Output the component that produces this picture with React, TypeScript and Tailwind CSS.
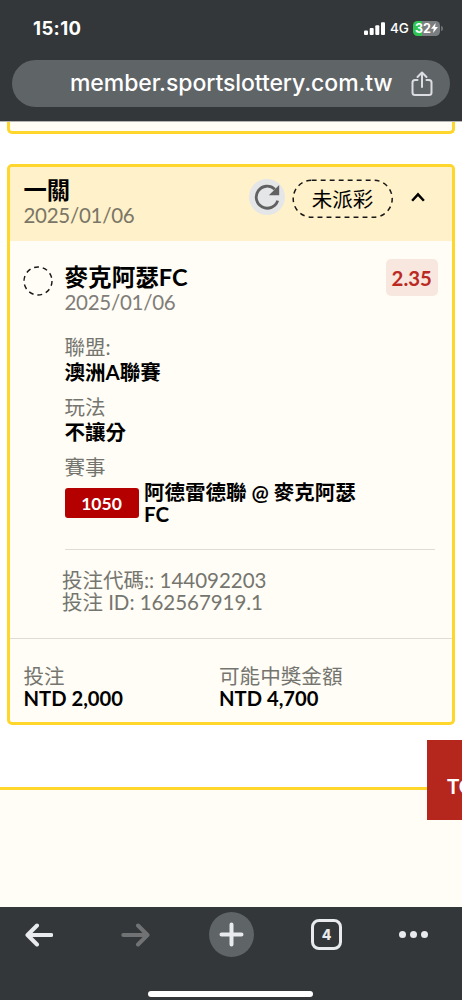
import React from "react";

interface FieldProps {
  label: string;
  children: React.ReactNode;
  className?: string;
}

const Field: React.FC<FieldProps> = ({ label, children, className = "" }) => (
  <div className={className}>
    <div className="h-[25px] leading-[22px] text-[#757570]">{label}</div>
    <div className="h-[22px] font-bold leading-[22px] text-black">
      {children}
    </div>
  </div>
);

const StatusBar = () => (
  <div className="flex h-[60px] items-start justify-between pl-[33px] pr-[19px] pt-[17px] text-white">
    <div className="text-[18.5px] font-bold leading-[22px] tracking-[0.4px]">
      15:10
    </div>
    <div className="flex h-[22px] items-center">
      <svg className="h-[13px] w-[21px]" viewBox="0 0 21 13" fill="white">
        <rect x="0" y="8.5" width="4" height="4.5" rx="1" />
        <rect x="5.7" y="6" width="4" height="7" rx="1" />
        <rect x="11.3" y="3.2" width="4" height="9.8" rx="1" />
        <rect x="17" y="0.3" width="4" height="12.7" rx="1" />
      </svg>
      <span className="ml-[5px] w-[23px] text-[13.5px] font-medium leading-[22px]">
        4G
      </span>
      {/* battery */}
      <div className="flex h-[15px] w-[27px] items-center justify-center rounded-[4.5px] bg-[linear-gradient(90deg,#30c552_9px,#7b7e80_9px)] text-[12.5px] font-bold leading-[15px]">
        32
        <svg className="h-[10px] w-[7px]" viewBox="0 0 7 10" fill="white">
          <path d="M4.6 0 0 5.7h2.8L2 10l5-5.9H4.1z" />
        </svg>
      </div>
      <div className="ml-px h-[5px] w-[2px] rounded-r-full bg-[#6d7072]" />
    </div>
  </div>
);

const AddressBar = () => (
  <div className="mx-[12px] flex h-[47px] items-center rounded-full bg-[#5f6467] pl-[58px] pr-[17px]">
    <div className="h-[30px] flex-1 whitespace-nowrap text-[23px] font-medium leading-[29px] tracking-[-0.08px] text-white">
      member.sportslottery.com.tw
    </div>
    <svg
      className="h-[26px] w-[22px]"
      viewBox="0 0 22 26"
      fill="none"
      stroke="#dcdde3"
      strokeWidth={2}
      strokeLinecap="round"
      strokeLinejoin="round"
    >
      <path d="M6.5 9H4a2.5 2.5 0 0 0-2.5 2.5v10A2.5 2.5 0 0 0 4 24h14a2.5 2.5 0 0 0 2.5-2.5v-10A2.5 2.5 0 0 0 18 9h-2.5" />
      <path d="M11 16V2M6.5 6 11 1.5 15.5 6" />
    </svg>
  </div>
);

const BetHeader = () => (
  <div className="flex h-[74px] bg-[#fff1c9] pl-[13.5px] pt-[11px]">
    <div className="w-[225.5px]">
      <div className="h-[25.5px] text-[23.3px] font-bold leading-[25px] text-black">
        一關
      </div>
      <div className="h-[22px] tracking-[-0.27px] leading-[22px] text-[#7a7667]">
        2025/01/06
      </div>
    </div>
    <div className="mt-[1px] flex h-[36px] w-[36px] items-center justify-center rounded-full bg-[#e5e6e8]">
      <svg className="h-[26px] w-[26px]" viewBox="0 0 26 26">
        <path
          d="M23.7 16.6A11 11 0 1 1 20.8 5.2"
          fill="none"
          stroke="#616161"
          strokeWidth="2.8"
        />
        <path d="M25.2 1V11.3H14.9z" fill="#616161" />
      </svg>
    </div>
    <div className="relative ml-[6.5px] mt-[1px] flex h-[40px] w-[102px] items-center justify-center text-black">
      <svg className="absolute inset-0 h-full w-full" viewBox="0 0 102 40">
        <rect
          x="1.2"
          y="1.2"
          width="99"
          height="37"
          rx="18.5"
          fill="none"
          stroke="#171717"
          strokeWidth="1.5"
          strokeDasharray="4.9 4.1"
        />
      </svg>
      <span className="leading-[22px]">未派彩</span>
    </div>
    <svg
      className="ml-[17.5px] mt-[13px] h-[12px] w-[14px]"
      viewBox="0 0 15 12"
      fill="none"
      stroke="black"
      strokeWidth="2.7"
    >
      <path d="M1.2 10 7.5 3.2 13.8 10" />
    </svg>
  </div>
);

const BetBody = () => (
  <div className="h-[398px] border-b border-[#dfdcd6] pl-[13px] pr-[14px] pt-[18px]">
    <div className="flex">
      <svg className="mt-[7px] h-[30px] w-[30px]" viewBox="0 0 30 30">
        <circle
          cx="15"
          cy="15"
          r="14"
          fill="none"
          stroke="#171717"
          strokeWidth="1.4"
          strokeDasharray="4.9 3.9"
        />
      </svg>
      <div className="ml-[11.5px] mt-[6px] flex-1">
        <div className="h-[25.5px] text-[23.6px] font-bold leading-[25px] text-black">
          麥克阿瑟FC
        </div>
        <div className="h-[22.5px] tracking-[-0.27px] leading-[22px] text-[#7f7e7a]">
          2025/01/06
        </div>
      </div>
      <div className="h-[37px] w-[52.5px] rounded-[5px] bg-[#f8e7df] text-center text-[20.4px] font-bold leading-[38px] text-[#bb2a22]">
        2.35
      </div>
    </div>

    <div className="ml-[41.5px] mr-[3px] mt-[23px]">
      <Field label="聯盟:" className="mb-[13px]">
        澳洲A聯賽
      </Field>
      <Field label="玩法" className="mb-[13px]">
        不讓分
      </Field>
      <div className="h-[25px] leading-[22px] text-[#757570]">賽事</div>
      <div className="flex h-[69px] border-b border-[#dfdcd6] font-bold">
        <div className="mt-[7px] h-[30px] w-[74px] rounded-[3px] bg-[#b50000] text-center text-[17.5px] leading-[31px] text-white">
          1050
        </div>
        <div className="ml-[5.5px] w-[225px] leading-[22px] text-black">
          阿德雷德聯 @ 麥克阿瑟FC
        </div>
      </div>
    </div>

    <div className="ml-[39px] mt-[19px] text-[20.5px] leading-[22.4px] text-[#757570]">
      <div>投注代碼:: 144092203</div>
      <div className="tracking-[-0.04px]">投注 ID: 162567919.1</div>
    </div>
  </div>
);

const BetFooter = () => (
  <div className="flex pl-[13.5px] pt-[26px]">
    <div className="w-[195.5px]">
      <div className="leading-[22px] text-[#757570]">投注</div>
      <div className="text-[20.2px] font-bold leading-[22px] text-black">
        NTD 2,000
      </div>
    </div>
    <div>
      <div className="text-[20.6px] leading-[22px] text-[#757570]">
        可能中獎金額
      </div>
      <div className="text-[20.2px] font-bold leading-[22px] text-black">
        NTD 4,700
      </div>
    </div>
  </div>
);

const BottomBar = () => (
  <div className="h-[93px] bg-[#343739] pt-[5px]">
    <div className="flex h-[45px] items-center pl-[25px]">
      <svg
        className="h-[24px] w-[28px]"
        viewBox="0 0 28 24"
        fill="none"
        stroke="#e8eaed"
        strokeWidth="4"
        strokeLinecap="round"
        strokeLinejoin="round"
      >
        <path d="M26.3 12H3M12 2.5 2.5 12 12 21.5" />
      </svg>
      <svg
        className="ml-[68px] h-[24px] w-[29px]"
        viewBox="0 0 29 24"
        fill="none"
        stroke="#717273"
        strokeWidth="4"
        strokeLinecap="round"
        strokeLinejoin="round"
      >
        <path d="M2.3 12H25.5M17 2.5 26.5 12 17 21.5" />
      </svg>
      <div className="ml-[58.5px] flex h-[45px] w-[45px] items-center justify-center rounded-full bg-[#5f6467]">
        <svg
          className="h-[25px] w-[25px]"
          viewBox="0 0 25 25"
          stroke="#e8eaed"
          strokeWidth="4"
          strokeLinecap="round"
        >
          <path d="M12.5 2.5v20M2.5 12.5h20" />
        </svg>
      </div>
      <div className="ml-[57.5px] flex h-[31px] w-[31px] items-center justify-center rounded-[8px] border-[3px] border-[#e8eaed] text-[14px] font-extrabold text-[#e8eaed]">
        4
      </div>
      <div className="ml-[57px] flex gap-[4px]">
        <div className="h-[7px] w-[7px] rounded-full bg-[#e8eaed]" />
        <div className="h-[7px] w-[7px] rounded-full bg-[#e8eaed]" />
        <div className="h-[7px] w-[7px] rounded-full bg-[#e8eaed]" />
      </div>
    </div>
    <div className="ml-[148px] mt-[34px] h-[6px] w-[165px] rounded-full bg-white" />
  </div>
);

const App = () => {
  return (
    <div className="flex h-[1000px] w-[462px] flex-col overflow-hidden bg-white font-[Inter,sans-serif]">
      <div className="h-[121px] shrink-0 bg-[#343739]">
        <StatusBar />
        <AddressBar />
      </div>

      <div className="relative h-[786px] shrink-0 border-t border-[#b5b5b2] font-[Lato,'Noto_Sans_CJK_TC',sans-serif] text-[20.5px]">
        {/* end of the previous ticket */}
        <div className="mx-[7px] h-[12px] rounded-b-[5px] border-x-[3px] border-b-[3px] border-[#ffd62b] bg-[#fffdf5]" />

        <div className="mx-[7px] mt-[30px] h-[561px] overflow-hidden rounded-[5px] border-[3px] border-[#ffd62b] bg-[#fffdf5]">
          <BetHeader />
          <BetBody />
          <BetFooter />
        </div>

        <div className="mt-[62px] h-[120px] border-t-[3px] border-[#ffd62b] bg-[#fffdf5]" />

        {/* back-to-top button, partly off screen */}
        <div className="absolute right-0 top-[618px] h-[80px] w-[35px] overflow-hidden whitespace-nowrap bg-[#b5261c] pl-[20px] font-bold leading-[92px] text-white">
          TO
        </div>
      </div>

      <BottomBar />
    </div>
  );
};

export default App;
